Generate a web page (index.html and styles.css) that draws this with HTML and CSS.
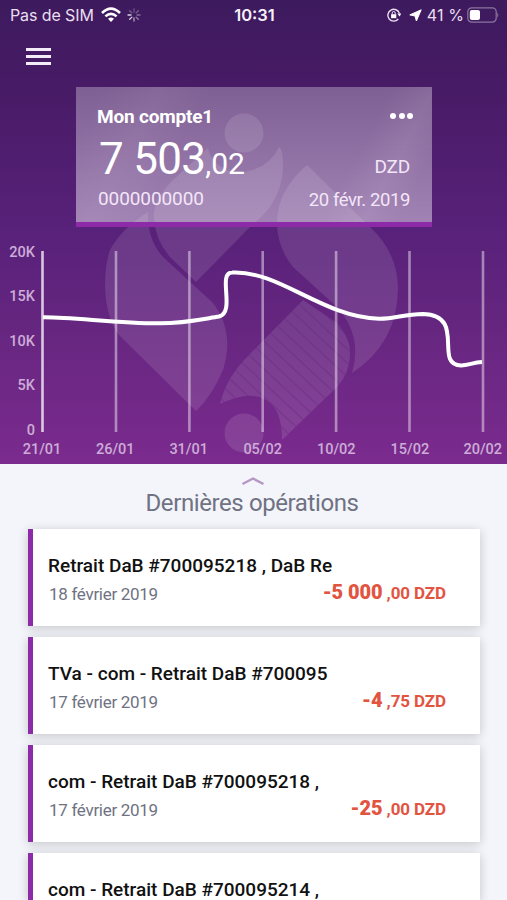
FILE: index.html
```
<!DOCTYPE html>
<html lang="fr">
<head>
  <meta charset="UTF-8">
  <meta name="viewport" content="width=device-width, initial-scale=1">
  <title>Mon compte</title>
  <link rel="stylesheet" href="styles.css">
</head>
<body>

  <header class="hero">
    <svg class="watermark" viewBox="0 0 507 464">
      <defs>
        <pattern id="stripes" width="10.2" height="10.2" patternUnits="userSpaceOnUse" patternTransform="translate(303 307) rotate(43)">
          <rect y="0" width="10.2" height="1.1" fill="#5b2379" fill-opacity=".38"/>
        </pattern>
      </defs>
      <g class="mark">
        <circle cx="244" cy="133" r="19.5"/>
        <path d="M279 147Q283 149 283 167Q283 187 270 207Q263 216 250 227L196 282L170 257Q155 240 154 218Q152 201 173 180L208 148Q212 167 236 173Q268 171 279 147Z"/>
        <path d="M148 212Q122 228 110 250Q105 264 105 286Q106 318 119 335L196 411Q212 396 223 370Q235 332 213 303L163 257Q147 239 148 212Z"/>
        <path d="M307 165L370 227Q397 252 398 287Q398 343 352 373Q363 336 337 307L293 267Q277 247 277 223Q277 191 307 165Z"/>
        <path d="M303 300L337 323Q350 338 350 352Q350 373 337 387L282 440Q282 409 266 400Q250 390 220 404Q226 378 247 357Z"/>
        <circle cx="244" cy="433" r="19.5"/>
      </g>
      <path fill="url(#stripes)" d="M303 300L337 323Q350 338 350 352Q350 373 337 387L282 440Q282 409 266 400Q250 390 220 404Q226 378 247 357Z"/>
    </svg>

    <div class="status">
      <div class="status-left">
        <span class="carrier">Pas de SIM</span>
        <svg width="20" height="16" viewBox="0 0 20 16" fill="none" stroke="#fff" stroke-width="2.6">
          <path d="M1 6Q10-2.6 19 6"/>
          <path d="M4.4 9.4Q10 4.2 15.6 9.4"/>
          <path d="M7 11.8Q10 9 13 11.8L10 15Z" fill="#fff" stroke="none"/>
        </svg>
        <svg class="spinner" width="14" height="14" viewBox="-7 -7 14 14" stroke="#fff" stroke-width="1.3" stroke-linecap="round">
          <path d="M0-3V-6" opacity=".25"/>
          <path d="M2.1-2.1L4.3-4.3" opacity=".3"/>
          <path d="M3 0H6" opacity=".35"/>
          <path d="M2.1 2.1L4.3 4.3" opacity=".45"/>
          <path d="M0 3V6" opacity=".6"/>
          <path d="M-2.1 2.1L-4.3 4.3" opacity=".8"/>
          <path d="M-3 0H-6" opacity=".8"/>
          <path d="M-2.1-2.1L-4.3-4.3" opacity=".3"/>
        </svg>
      </div>
      <span class="time">10:31</span>
      <div class="status-right">
        <svg width="14" height="14" viewBox="0 0 14 14" fill="none" stroke="#eadff0" stroke-width="1.4">
          <path d="M12.4 5.4A5.9 5.9 0 1 0 11.3 11"/>
          <path d="M10.3 5.5H14.2L12.6 8.6Z" fill="#fff" stroke="none"/>
          <rect x="4.1" y="6.2" width="5.2" height="4" fill="#fff" stroke="none"/>
          <path d="M5.2 6.5V5A1.5 1.5 0 0 1 8.2 5V6.5" stroke-width="1"/>
        </svg>
        <svg class="arrow" width="13" height="13" viewBox="0 0 13 13" fill="#fff" stroke="#fff" stroke-linejoin="round"><path d="M12.2.8L7.4 12L6 7L.8 5.9Z"/></svg>
        <span class="percent">41 %</span>
        <svg class="battery" width="32" height="16" viewBox="0 0 32 16">
          <rect x=".8" y=".8" width="28.4" height="14.4" rx="4" fill="none" stroke="#fff" stroke-opacity=".4" stroke-width="1.2"/>
          <rect x="2.8" y="3" width="10.2" height="10" rx="2" fill="#fff"/>
          <path d="M30.4 5.5Q32.2 8 30.4 10.5Z" fill="#fff" fill-opacity=".45"/>
        </svg>
      </div>
    </div>

    <div class="menu"><i></i><i></i><i></i></div>

    <section class="account">
      <div class="row row-name">
        <h1>Mon compte1</h1>
        <div class="dots"><i></i><i></i><i></i></div>
      </div>
      <div class="row row-amount">
        <div class="balance">7 503<small>,02</small></div>
        <span class="currency">DZD</span>
      </div>
      <div class="row row-number">
        <span class="number">0000000000</span>
        <span class="date">20 févr. 2019</span>
      </div>
    </section>

    <svg class="chart" width="507" height="237" viewBox="0 227 507 237">
      <g class="grid">
        <path class="axis" d="M42.5 251V432"/>
        <path d="M116 251V432M189.4 251V432M262.7 251V432M336.1 251V432M409.5 251V432M483 251V432"/>
      </g>
      <path class="line" d="M43 317.3C73 317 118 323.5 160 323.3C184 323.3 203 319 219 316.5C236 312 217 273 232 272.6C279 270 322 317 379 318.8C395 319 404 314 423 313.9C467 315 433 365 461 365.4C468 365.5 473 362.5 482 362"/>
      <g class="labels" text-anchor="end">
        <text x="35" y="256.5">20K</text>
        <text x="35" y="301">15K</text>
        <text x="35" y="345.5">10K</text>
        <text x="35" y="390">5K</text>
        <text x="35" y="434.5">0</text>
      </g>
      <g class="labels" text-anchor="middle">
        <text x="42" y="453.5">21/01</text>
        <text x="115.3" y="453.5">26/01</text>
        <text x="188.7" y="453.5">31/01</text>
        <text x="262.7" y="453.5">05/02</text>
        <text x="336.3" y="453.5">10/02</text>
        <text x="409.9" y="453.5">15/02</text>
        <text x="482.8" y="453.5">20/02</text>
      </g>
    </svg>
  </header>

  <main>
    <svg class="chevron" width="24" height="10" viewBox="0 0 24 10"><path d="M1.5 8L12 2.5L22.5 8" fill="none" stroke="#b596c4" stroke-width="2.4"/></svg>
    <h2>Dernières opérations</h2>

    <article class="op">
      <h3>Retrait DaB #700095218 , DaB Re</h3>
      <div class="row">
        <span class="op-date">18 février 2019</span>
        <span class="op-amount"><b>-5 000</b> ,00 DZD</span>
      </div>
    </article>
    <article class="op">
      <h3>TVa - com - Retrait DaB #700095</h3>
      <div class="row">
        <span class="op-date">17 février 2019</span>
        <span class="op-amount"><b>-4</b> ,75 DZD</span>
      </div>
    </article>
    <article class="op">
      <h3>com - Retrait DaB #700095218 ,</h3>
      <div class="row">
        <span class="op-date">17 février 2019</span>
        <span class="op-amount"><b>-25</b> ,00 DZD</span>
      </div>
    </article>
    <article class="op op-last">
      <h3>com - Retrait DaB #700095214 ,</h3>
    </article>
  </main>

</body>
</html>
```
FILE: styles.css
```
:root {
  --purple: #8c2aa8;
  --bg: #f4f5fa;
  --grey: #6f7282;
  --red: #e2543f;
}
*, *::before, *::after { box-sizing:border-box; margin:0; padding:0; }
html, body { height:900px; overflow:hidden; }
body { width:507px; background:var(--bg); font-family:Roboto, sans-serif; }
svg { display:block; flex:none; }
.row { display:flex; justify-content:space-between; align-items:baseline; }

.hero {
  position:relative;
  height:464px;
  background:linear-gradient(#3d1a5e 0, #481b66 90px, #58217a 230px, #662680 330px, #7b2b8e 464px);
  color:#fff;
}
.watermark { position:absolute; top:0; left:0; width:507px; height:464px; }
.mark { fill:#fff; fill-opacity:.11; }

.status {
  position:relative;
  display:grid; grid-template-columns:1fr auto 1fr; align-items:center;
  height:30px;
  padding:0 8px 0 10px;
  font-family:Inter, sans-serif; font-size:16px;
  color:#eadff0;
}
.status-left, .status-right { display:flex; align-items:center; }
.status-right { justify-content:flex-end; }
.carrier { letter-spacing:-.1px; margin-right:7px; }
.spinner { margin-left:6px; }
.time { font-weight:600; font-size:16.5px; color:#f6f0f9; }
.arrow { margin:0 5px 0 8px; }
.percent { letter-spacing:.1px; }
.battery { margin-left:3px; }

.menu {
  position:relative;
  display:flex; flex-direction:column; gap:4px;
  width:25px;
  margin:18px 0 0 26px;
}
.menu i { height:3px; background:#f3ebf7; }

.account {
  position:relative;
  width:356px; height:140px;
  margin:22px 0 0 76px;
  padding:17px 22px 0 21px;
  background:
    linear-gradient(118deg, transparent 6%, rgba(255,255,255,.05) 20%, transparent 32%, transparent 74%, rgba(255,255,255,.07) 84%, transparent 92%),
    linear-gradient(rgba(255,255,255,.3), rgba(255,255,255,.44));
  border-bottom:5px solid var(--purple);
}
.account .row-name { align-items:center; height:24px; }
h1 { font-size:19px; font-weight:700; letter-spacing:-.2px; }
.dots { display:flex; gap:2.5px; margin-right:-3px; }
.dots i { width:6px; height:6px; border-radius:50%; background:#fff; }
.row-amount { height:52px; line-height:62px; }
.balance { font-size:44px; letter-spacing:-.7px; padding-left:2px; white-space:nowrap; }
.balance small { font-size:30px; letter-spacing:-.1px; }
.currency { font-size:19px; letter-spacing:-.2px; color:#f3e6f8; position:relative; top:-1px; }
.row-number { font-size:19px; line-height:38px; color:#f3e6f8; }
.number { padding-left:1px; letter-spacing:-.1px; }
.date { font-size:18.5px; letter-spacing:-.4px; position:relative; top:1px; }

.chart { position:relative; }
.grid path { fill:none; stroke:#fff; stroke-opacity:.45; stroke-width:2.6; }
.grid .axis { stroke-opacity:.75; }
.line { fill:none; stroke:#fff; stroke-width:4; }
.labels { font-size:14.5px; font-weight:500; fill:#cdacd8; }

main { height:436px; padding:13px 27px 0 28px; overflow:hidden; }
.chevron { margin:0 auto; position:relative; top:-1px; left:-1px; }
h2 { height:42px; line-height:32px; font-size:24px; font-weight:400; letter-spacing:-.4px; color:var(--grey); text-align:center; position:relative; left:-2px; }
.op {
  height:97px;
  margin-bottom:11px;
  padding:25px 34px 0 15px;
  background:#fff;
  border-left:5px solid var(--purple);
  box-shadow:0 2px 10px rgba(0,0,0,.2);
}
.op-last { height:47px; margin-bottom:0; }
h3 { font-size:19px; font-weight:500; line-height:24px; color:#111; }
.op .row { line-height:28px; }
.op-date { font-size:17px; letter-spacing:-.3px; color:var(--grey); padding-left:1px; position:relative; top:1px; }
.op-amount { font-size:17px; font-weight:700; letter-spacing:-.1px; color:var(--red); }
.op-amount b { font-size:20px; }
```
